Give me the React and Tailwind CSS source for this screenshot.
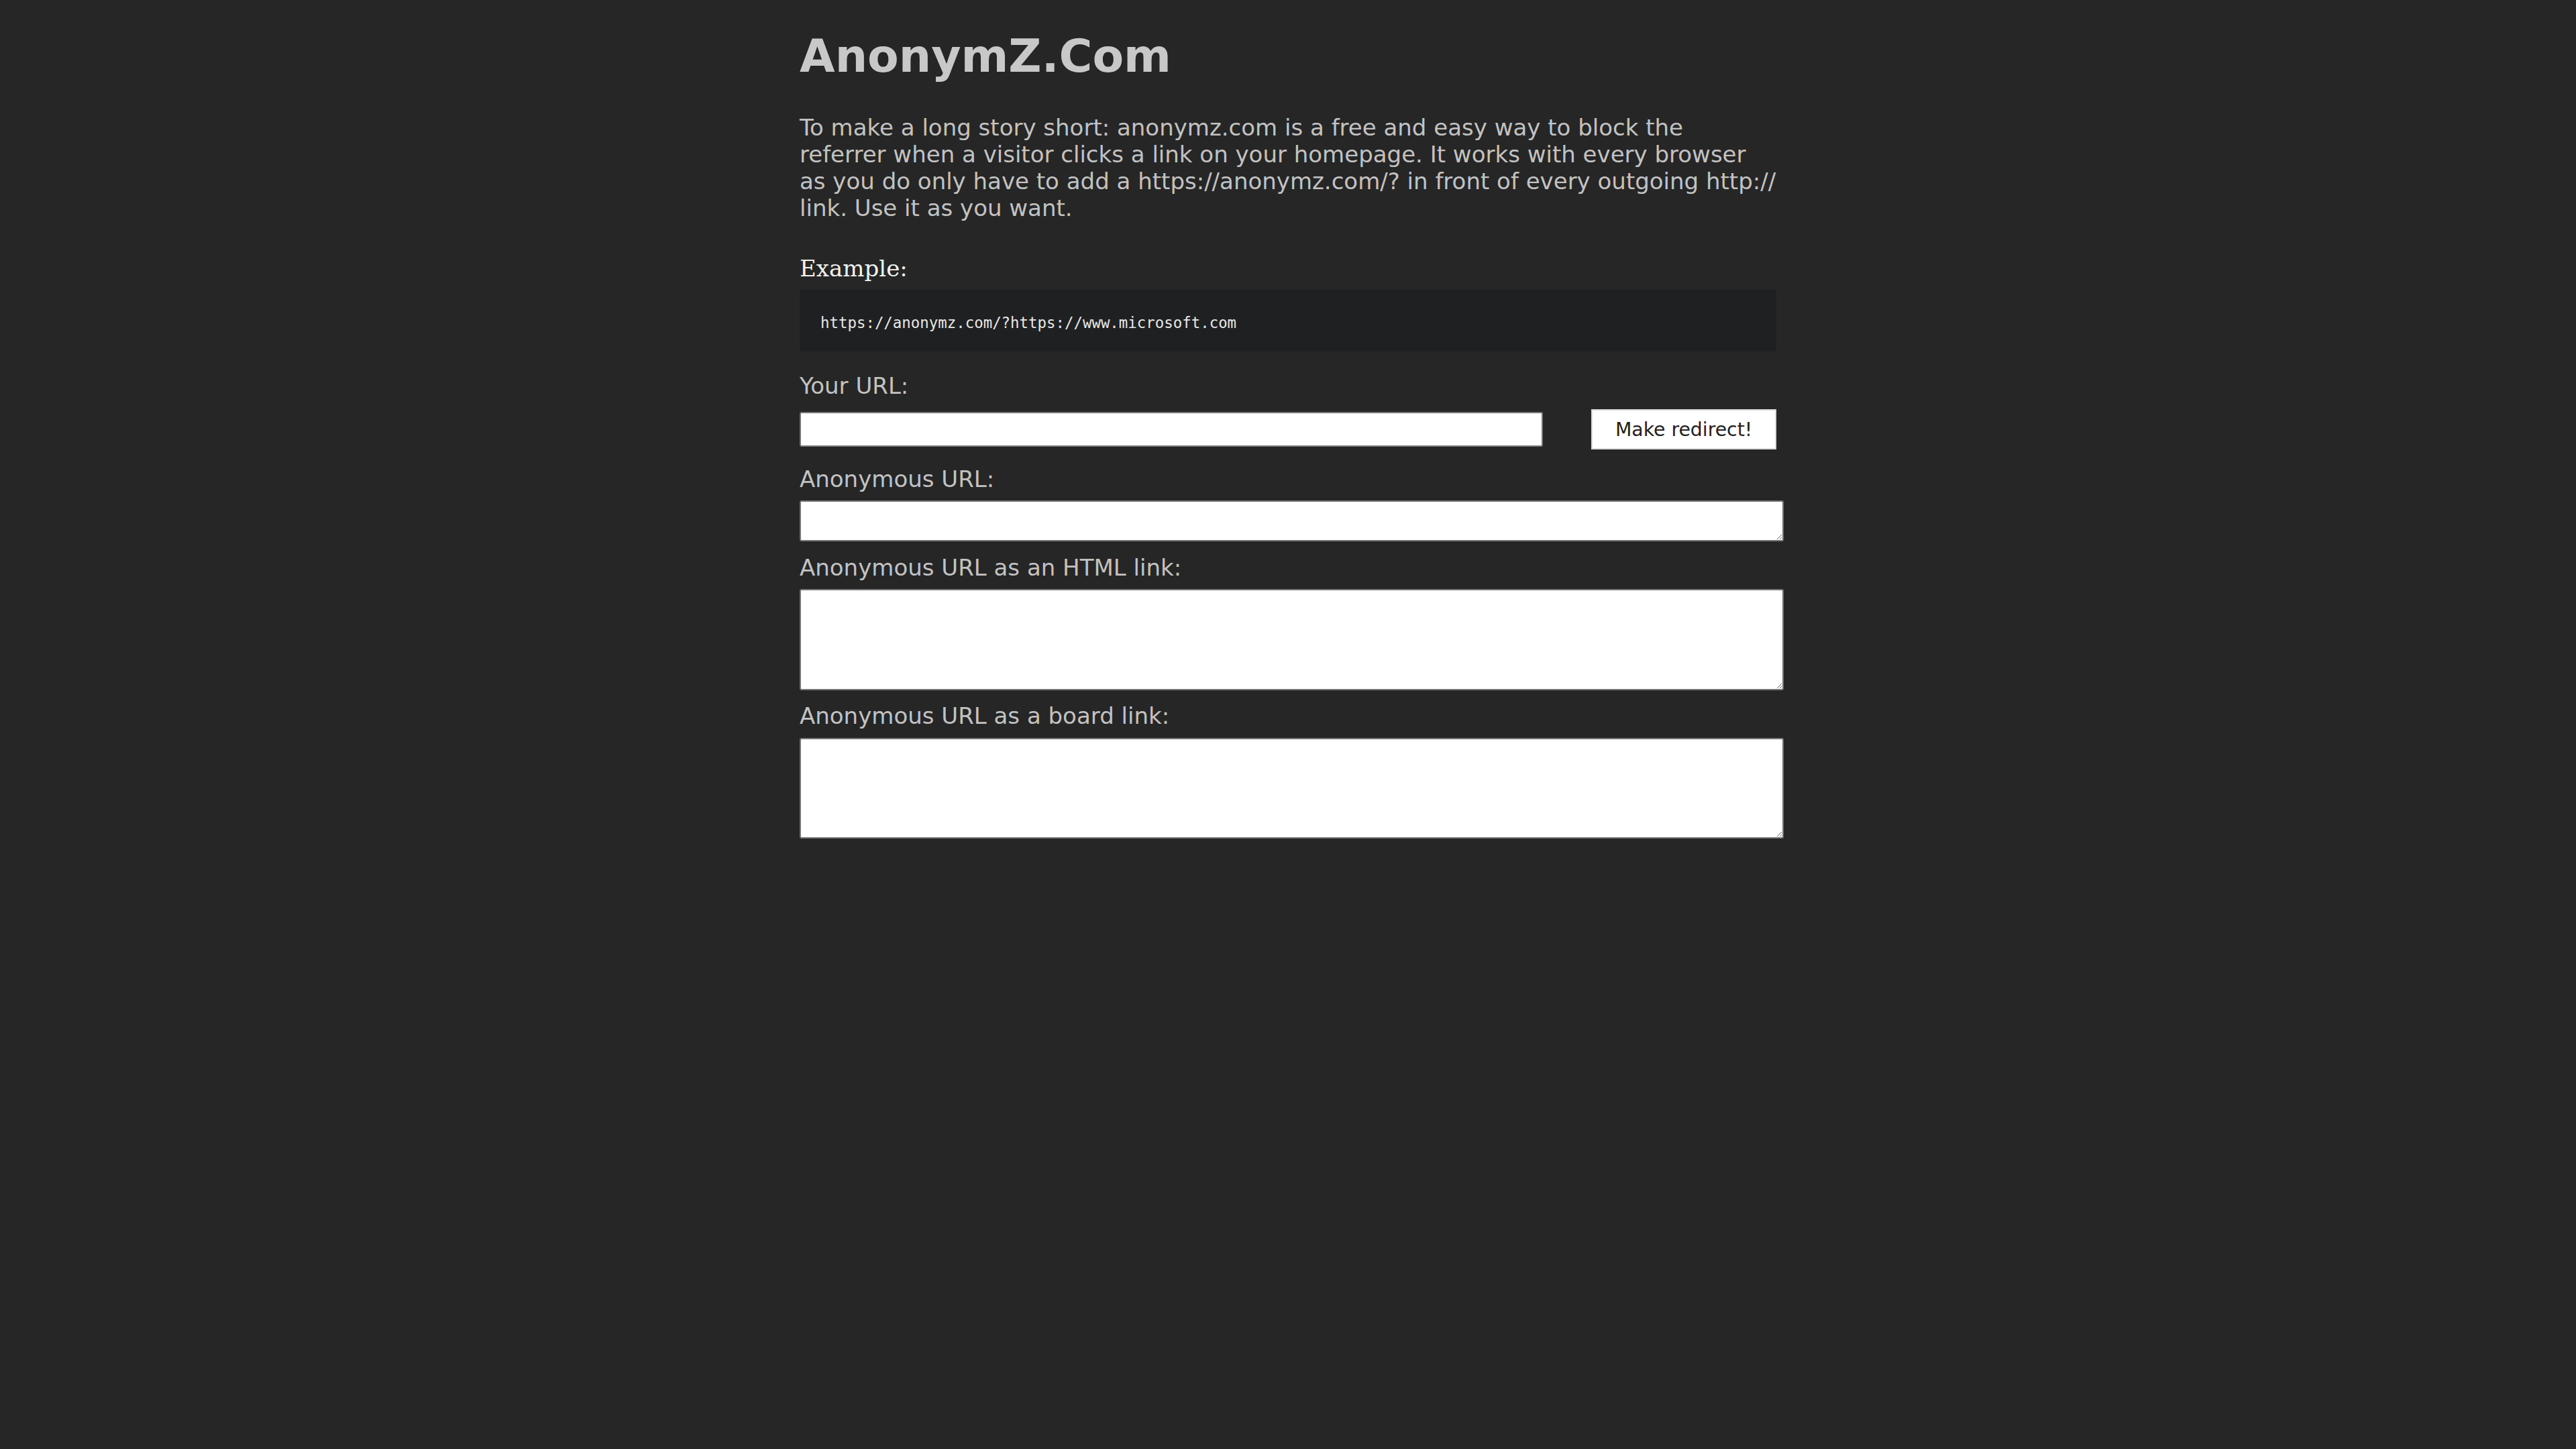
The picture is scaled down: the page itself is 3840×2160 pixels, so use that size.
import React from 'react';

const Label = ({ children, className = '' }) => (
  <div className={`text-[34px] leading-[40px] text-[#c2c2c2] ${className}`}>{children}</div>
);

const Box = ({ height, className = '' }) => (
  <textarea
    className={`block resize w-[1467px] bg-white border-2 border-[#767676] rounded-[3px] ${height} ${className}`}
  />
);

const App = () => {
  return (
    <div className="min-h-[2160px] bg-[#262626] font-['DejaVu_Sans',sans-serif]">
      <div className="w-[1456px] mx-auto pt-[44px]">
        <h1 className="text-[68px] leading-[80px] font-bold text-[#c8c8c8]">AnonymZ.Com</h1>

        <p className="mt-[46px] text-[34px] leading-[40px] text-[#c2c2c2]">
          To make a long story short: anonymz.com is a free and easy way to block the referrer when a
          visitor clicks a link on your homepage. It works with every browser as you do only have to
          add a https://anonymz.com/? in front of every outgoing http:// link. Use it as you want.
        </p>

        <h2 className="mt-[50px] text-[34px] leading-[40px] text-[#f2f2f2] font-['DejaVu_Serif',serif]">
          Example:
        </h2>

        <pre className="mt-[12px] h-[92px] bg-[#1f2022] px-[31px] pt-[35px] pb-[29px] text-[22.4px] leading-[28px] text-[#e8e8e8] font-['DejaVu_Sans_Mono',monospace]">
          https://anonymz.com/?https://www.microsoft.com
        </pre>

        <Label className="mt-[31px]">Your URL:</Label>
        <div className="mt-[15px] flex items-center">
          <input
            type="text"
            className="w-[1108px] h-[52px] bg-white border-2 border-[#767676] rounded-[3px]"
          />
          <button className="ml-[72px] w-[276px] h-[60px] pt-[2px] bg-white border-2 border-[#dcdcdc] text-[28.3px] leading-[34px] text-[#222222]">
            Make redirect!
          </button>
        </div>

        <Label className="mt-[24px]">Anonymous URL:</Label>
        <Box height="h-[61px]" className="mt-[12px]" />

        <Label className="mt-[19px]">Anonymous URL as an HTML link:</Label>
        <Box height="h-[151px]" className="mt-[12px]" />

        <Label className="mt-[18px]">Anonymous URL as a board link:</Label>
        <Box height="h-[150px]" className="mt-[13px]" />
      </div>
    </div>
  );
};

export default App;
